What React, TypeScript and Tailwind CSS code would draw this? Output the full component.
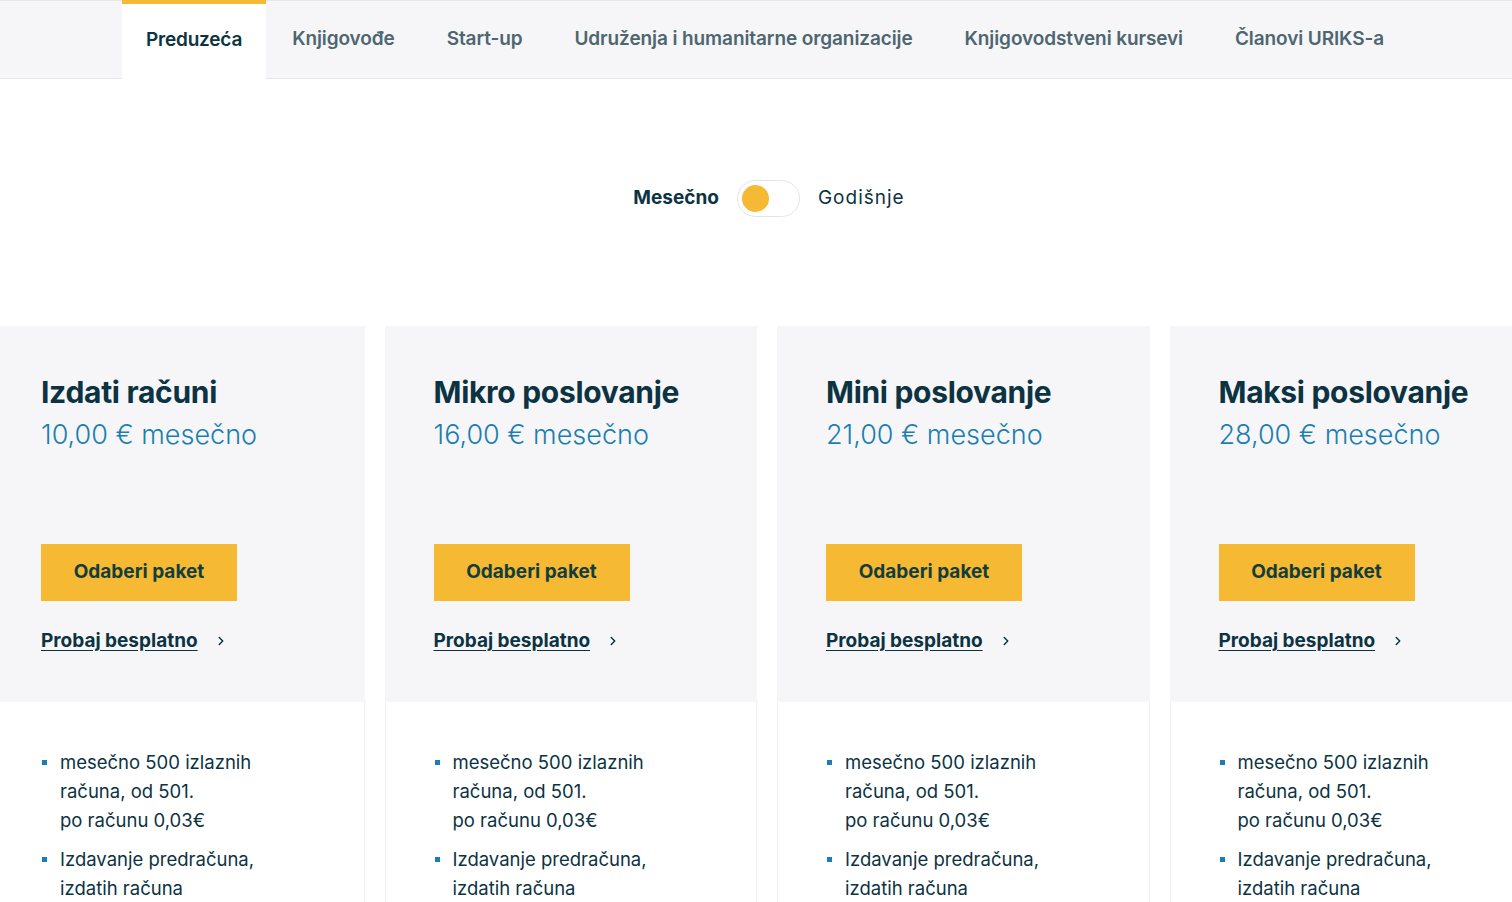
import React, { useState } from 'react';
import { ChevronRight } from 'lucide-react';

const tabs = [
  'Preduzeća',
  'Knjigovođe',
  'Start-up',
  'Udruženja i humanitarne organizacije',
  'Knjigovodstveni kursevi',
  'Članovi URIKS-a',
];

const plans = [
  { name: 'Izdati računi', price: '10,00 € mesečno' },
  { name: 'Mikro poslovanje', price: '16,00 € mesečno' },
  { name: 'Mini poslovanje', price: '21,00 € mesečno' },
  { name: 'Maksi poslovanje', price: '28,00 € mesečno' },
];

export default function App() {
  const [active, setActive] = useState(0);
  const [yearly, setYearly] = useState(false);

  return (
    <div className="min-h-screen bg-white overflow-hidden font-['Inter',sans-serif] text-[#0c3342]">
      {/* Tabs */}
      <div className="h-[79px] bg-[#f6f6f8] border-t border-b border-[#e5e7ec] flex pl-[122px]">
        {tabs.map((t, i) => (
          <button
            key={t}
            onClick={() => setActive(i)}
            className={
              i === active
                ? 'relative -mb-px -mt-px h-[79px] bg-white px-[24px] pb-[3px] text-[19px] font-semibold tracking-[-0.2px] text-[#0c3342] border-t-4 border-[#f5b933]'
                : 'h-full px-[26px] text-[19px] font-semibold tracking-[-0.1px] text-[#4d6670]'
            }
          >
            {t}
          </button>
        ))}
      </div>

      {/* Toggle */}
      <div className="h-[247px] flex items-center justify-center gap-[18px] pb-[8px] pl-[26px]">
        <span className={`text-[19px] ${yearly ? 'font-normal' : 'font-bold'} text-[#0c3342]`}>Mesečno</span>
        <button
          onClick={() => setYearly(!yearly)}
          className={`w-[63px] h-[37px] rounded-full border border-[#e3e5ea] bg-white flex items-center px-[4px] ${yearly ? 'justify-end' : 'justify-start'}`}
        >
          <span className="w-[27px] h-[27px] rounded-full bg-[#f5b933]" />
        </button>
        <span className={`text-[19px] tracking-[1px] ${yearly ? 'font-bold' : 'font-normal'} text-[#0c3342]`}>Godišnje</span>
      </div>

      {/* Plans */}
      <div className="flex gap-[20px] ml-[-8px]">
        {plans.map((p) => (
          <div key={p.name} className="w-[372.5px] shrink-0 flex flex-col">
            <div className="h-[376px] bg-[#f6f6f8] pl-[49px] pt-[48px]">
              <h2 className="text-[30px] leading-[36px] font-bold tracking-[-0.3px] text-[#0c3342]">{p.name}</h2>
              <p className="mt-[8px] text-[27px] leading-[34px] font-light text-[#1a7fb0]">{p.price}</p>
              <button className="mt-[92px] w-[196px] h-[57px] bg-[#f5b933] text-[19px] font-bold text-[#133d3c]">
                Odaberi paket
              </button>
              <a href="#" className="mt-[28px] flex items-center gap-[16px] text-[19px] leading-[24px] font-bold text-[#0c3342]">
                <span className="underline underline-offset-[3px]">Probaj besplatno</span>
                <ChevronRight className="w-[14px] h-[14px]" strokeWidth={2.5} />
              </a>
            </div>
            <div className="border-x border-[#eef0f3] pl-[49px] pt-[46px] pb-10">
              <ul className="flex flex-col gap-[10px] text-[18.5px] leading-[29px] text-[#0c3342]">
                <li className="flex">
                  <span className="mt-[12px] mr-[13px] w-[5px] h-[5px] bg-[#1a7fb0] shrink-0" />
                  <span>
                    mesečno 500 izlaznih
                    <br />
                    računa, od 501.
                    <br />
                    po računu 0,03€
                  </span>
                </li>
                <li className="flex">
                  <span className="mt-[12px] mr-[13px] w-[5px] h-[5px] bg-[#1a7fb0] shrink-0" />
                  <span>
                    Izdavanje predračuna,
                    <br />
                    izdatih računa
                  </span>
                </li>
              </ul>
            </div>
          </div>
        ))}
      </div>
    </div>
  );
}
